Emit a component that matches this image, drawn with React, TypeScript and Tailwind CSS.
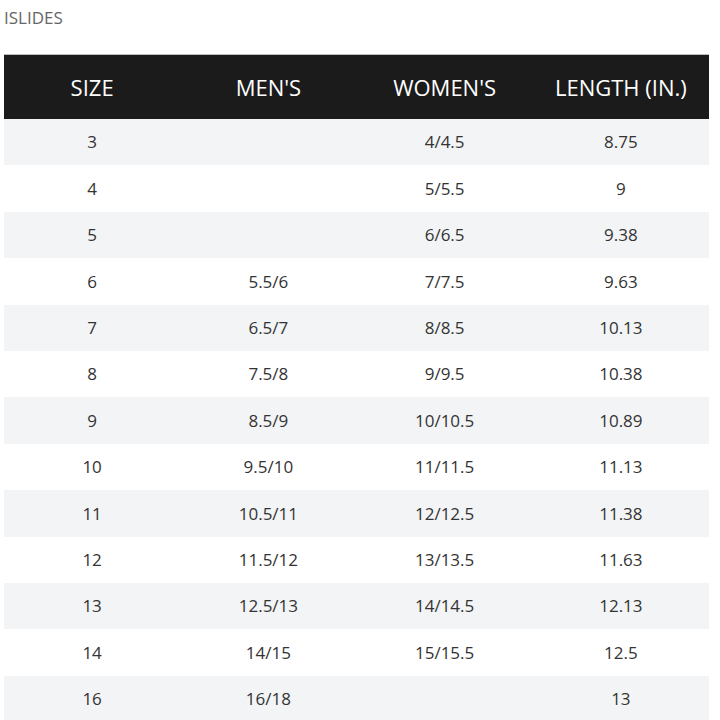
const rows: [string, string, string, string][] = [
  ["3", "", "4/4.5", "8.75"],
  ["4", "", "5/5.5", "9"],
  ["5", "", "6/6.5", "9.38"],
  ["6", "5.5/6", "7/7.5", "9.63"],
  ["7", "6.5/7", "8/8.5", "10.13"],
  ["8", "7.5/8", "9/9.5", "10.38"],
  ["9", "8.5/9", "10/10.5", "10.89"],
  ["10", "9.5/10", "11/11.5", "11.13"],
  ["11", "10.5/11", "12/12.5", "11.38"],
  ["12", "11.5/12", "13/13.5", "11.63"],
  ["13", "12.5/13", "14/14.5", "12.13"],
  ["14", "14/15", "15/15.5", "12.5"],
  ["16", "16/18", "", "13"],
]

const headers = ["SIZE", "MEN'S", "WOMEN'S", "LENGTH (IN.)"]

export default function App() {
  return (
    <div className="w-[720px] h-[720px] overflow-hidden bg-white font-['Open_Sans',sans-serif]">
      <div className="pl-1 pt-[5px] h-[54px] text-[17px] text-[#666]">ISLIDES</div>
      <div className="ml-1 w-[705px]">
        <div className="grid grid-cols-4 h-[65px] items-center bg-[#1b1b1b] border-t border-[#bbb] text-white text-[22px]">
          {headers.map((h) => (
            <div key={h} className="text-center">
              {h}
            </div>
          ))}
        </div>
        {rows.map((r, i) => (
          <div
            key={r[0]}
            className={`grid grid-cols-4 h-[46.4px] items-center text-[17px] text-[#333] ${
              i % 2 === 0 ? "bg-[#f3f4f6]" : "bg-white"
            }`}
          >
            {r.map((c, j) => (
              <div key={j} className="text-center">
                {c}
              </div>
            ))}
          </div>
        ))}
      </div>
    </div>
  )
}
